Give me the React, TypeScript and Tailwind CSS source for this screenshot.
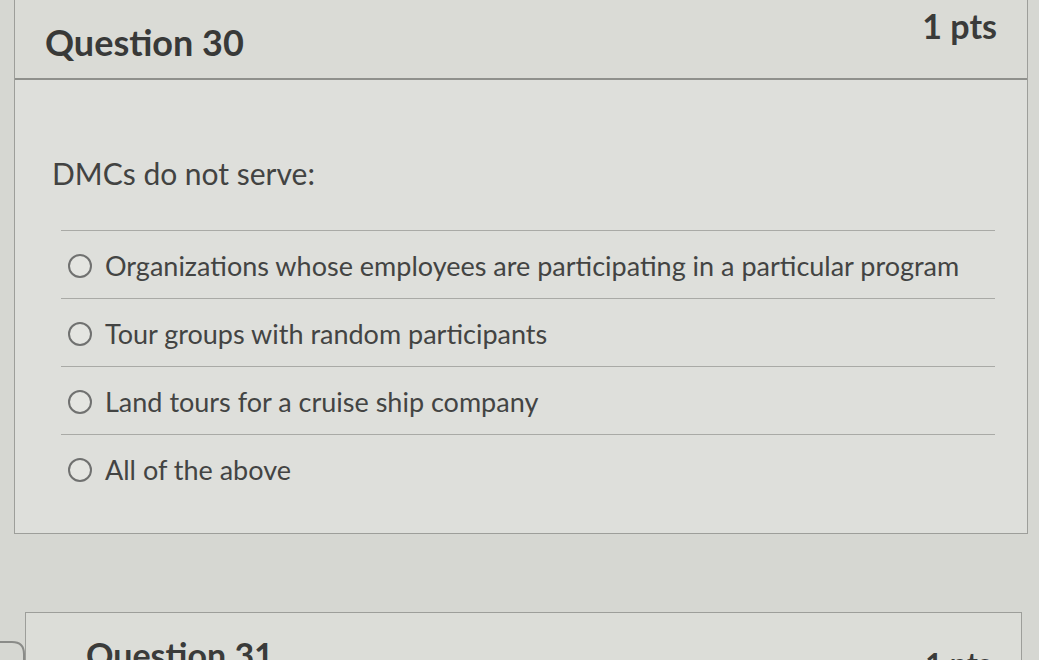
import React from "react";

const options = [
  "Organizations whose employees are participating in a particular program",
  "Tour groups with random participants",
  "Land tours for a cruise ship company",
  "All of the above",
];

function Radio() {
  return (
    <span className="inline-block h-[24px] w-[24px] shrink-0 rounded-full border-2 border-[#707170] bg-[#e4e5e1]" />
  );
}

export default function App() {
  return (
    <div className="h-[660px] overflow-hidden bg-[#d6d7d2] font-['Lato',sans-serif] text-[#3f403f]">
      {/* Question 30 card */}
      <div className="ml-[14px] mr-[11px] border-x border-b border-[#9d9e9a] bg-[#dedfdb]">
        <div className="flex h-[80px] items-start justify-between border-b-2 border-[#8f908c] bg-[#dadbd6] pl-[30px] pr-[30px]">
          <h2 className="pt-[20px] text-[36px] font-bold leading-[44px] text-[#383938]">
            Question 30
          </h2>
          <span className="pt-[6px] text-[34px] font-bold leading-[40px] text-[#3a3b3a]">
            1 pts
          </span>
        </div>

        <div className="pb-[30px]">
          <p className="pl-[37px] pt-[74px] text-[30px] leading-[38px] text-[#424342]">
            DMCs do not serve:
          </p>
          <div className="ml-[46px] mr-[32px] mt-[38px] border-t border-[#a9aaa6]">
            {options.map((text, i) => (
              <label
                key={text}
                className={
                  "flex h-[68px] items-center gap-[13px] pl-[7px] pt-[2px] " +
                  (i < options.length - 1 ? "border-b border-[#a9aaa6]" : "")
                }
              >
                <Radio />
                <span className="text-[27px] leading-[34px] text-[#434443]">{text}</span>
              </label>
            ))}
          </div>
        </div>
      </div>

      {/* Question 31 card, runs past the bottom of the window */}
      <div className="relative mt-[78px]">
        <svg
          className="absolute left-[-14px] top-[28px]"
          width="42"
          height="40"
          viewBox="0 0 42 40"
          fill="none"
        >
          <path d="M0 2 H26 Q38 2 38 14 V40" stroke="#8a8b88" strokeWidth="2" />
        </svg>
        <div className="ml-[25px] mr-[17px] border-x border-t border-[#9d9e9a] bg-[#dcddd8]">
          <div className="flex items-start justify-between pl-[60px] pr-[30px] pt-[22px]">
            <h2 className="text-[34px] font-bold leading-[40px] text-[#3a3b3a]">Question 31</h2>
            <span className="pt-[10px] text-[30px] font-bold leading-[36px] text-[#3a3b3a]">1 pts</span>
          </div>
        </div>
      </div>
    </div>
  );
}
